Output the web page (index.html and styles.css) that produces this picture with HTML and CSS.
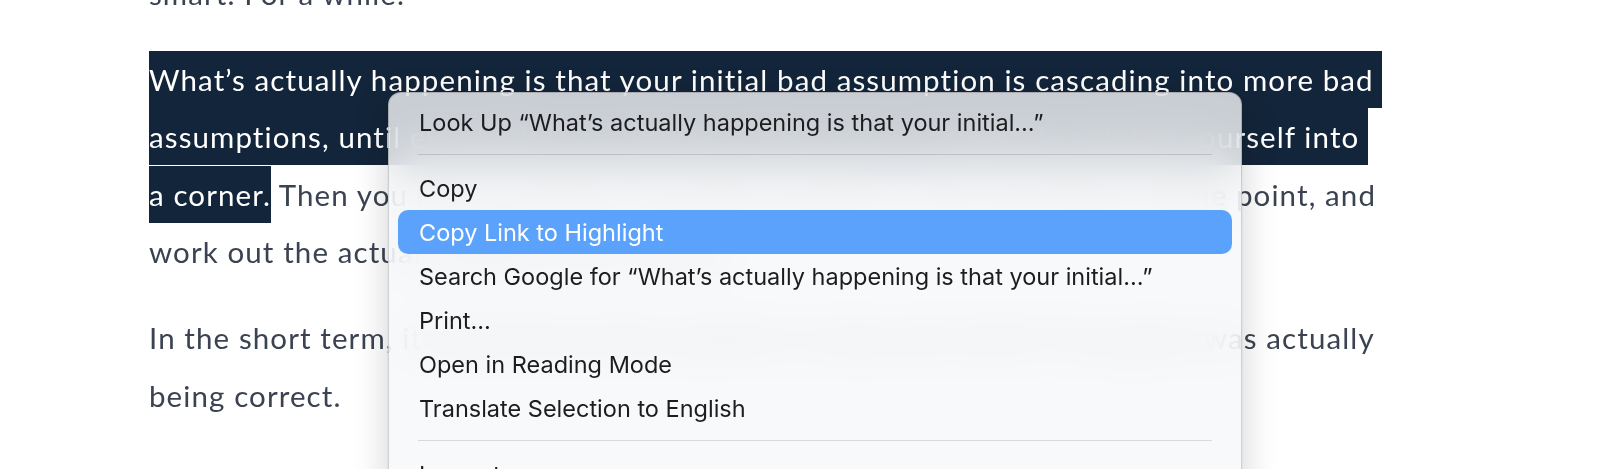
FILE: index.html
```html
<!DOCTYPE html>
<html lang="en">
<head>
<meta charset="utf-8">
<title>Article with context menu</title>
<link rel="stylesheet" href="styles.css">
</head>
<body>
<main class="article">
  <p>smart. For a while.</p>
  <p><span class="sel">What’s actually happening is that your initial bad assumption is cascading into more bad assumptions, until eventually you discover that you’ve completely painted yourself into a&nbsp;corner.</span> Then you have to throw it all away, go back to the last known stable point, and work out the actual problem from scratch.</p>
  <p>In the short term, it would have been quicker to stop and verify if my guess was actually being correct.</p>
</main>

<div class="menu">
  <div class="item">Look Up “What’s actually happening is that your initial…”</div>
  <div class="sep"></div>
  <div class="item">Copy</div>
  <div class="item active">Copy Link to Highlight</div>
  <div class="item">Search Google for “What’s actually happening is that your initial…”</div>
  <div class="item">Print…</div>
  <div class="item">Open in Reading Mode</div>
  <div class="item">Translate Selection to English</div>
  <div class="sep"></div>
  <div class="item">Inspect</div>
</div>
</body>
</html>
```

FILE: styles.css
```css
html, body {
  margin: 0;
  height: 100%;
  overflow: hidden;
  background: #ffffff;
}

body {
  font-family: Lato, "Noto Sans", sans-serif;
}

.article {
  margin-top: -35px;
  padding-left: 149px;
  width: 1250px;
}

.article p {
  margin: 0 0 28px;
  font-size: 29.5px;
  letter-spacing: 1.1px;
  line-height: 57.6px;
  color: #3b4352;
}

.sel {
  background: #13253a;
  color: #ffffff;
  padding: 11.1px 0;
  white-space: pre-wrap;
}

.menu {
  position: absolute;
  left: 388px;
  top: 92px;
  width: 854px;
  height: 430px;
  box-sizing: border-box;
  padding: 7px 9px;
  border: 1px solid rgba(0, 0, 0, 0.16);
  border-radius: 13px;
  background: rgba(246, 247, 249, 0.8);
  backdrop-filter: blur(22px) saturate(1.1);
  -webkit-backdrop-filter: blur(22px) saturate(1.1);
  box-shadow: 0 10px 36px rgba(0, 0, 0, 0.18), 0 0 0 0.5px rgba(0, 0, 0, 0.06);
  font-family: Inter, "Noto Sans", sans-serif;
}

.item {
  height: 44px;
  display: flex;
  align-items: center;
  padding: 0 21px;
  border-radius: 10px;
  font-size: 23.5px;
  color: #1d1d1f;
  white-space: nowrap;
}

.item.active {
  background: #5aa2fb;
  color: #ffffff;
}

.sep {
  height: 1px;
  margin: 10px 20px 11px;
  background: rgba(0, 0, 0, 0.13);
}
```
